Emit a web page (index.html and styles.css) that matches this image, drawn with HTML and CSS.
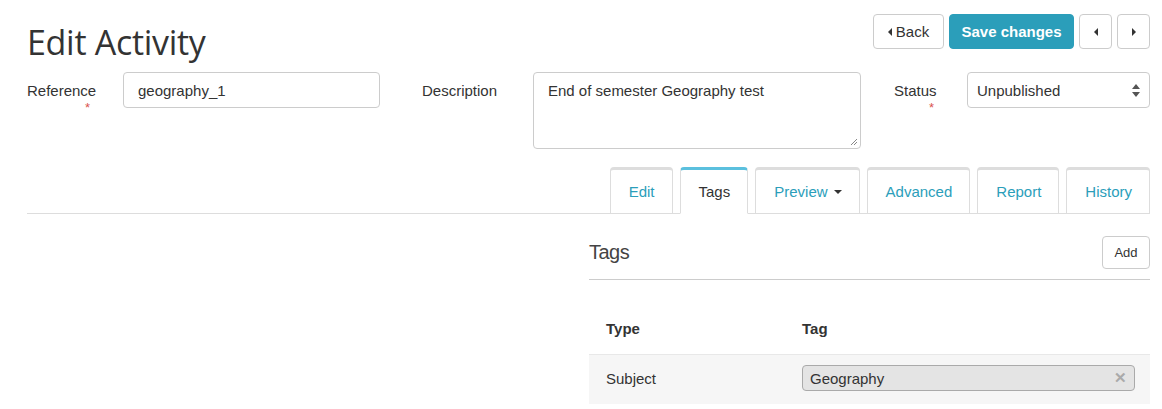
FILE: index.html
```html
<!DOCTYPE html>
<html>
<head>
<meta charset="utf-8">
<link rel="stylesheet" href="styles.css">
</head>
<body>
<div class="page">
  <div class="header">
    <h1 class="title">Edit Activity</h1>
    <div class="actions">
      <button class="btn btn-default btn-back"><span class="caret-left"></span>Back</button>
      <button class="btn btn-primary">Save changes</button>
      <button class="btn btn-default btn-icon"><span class="caret-left"></span></button>
      <button class="btn btn-default btn-icon"><span class="caret-right"></span></button>
    </div>
  </div>

  <div class="form-row">
    <div class="label label-ref">
      <span>Reference</span>
      <span class="req req-ref">*</span>
    </div>
    <div class="input input-ref">geography_1</div>

    <div class="label label-desc"><span>Description</span></div>
    <div class="textarea">End of semester Geography test
      <svg class="grip" width="8" height="8" viewBox="0 0 8 8"><path d="M7 1 L1 7 M7 4 L4 7" stroke="#888" stroke-width="1"/></svg>
    </div>

    <div class="label label-status">
      <span>Status</span>
      <span class="req req-status">*</span>
    </div>
    <div class="input select">Unpublished
      <svg class="updown" width="8" height="13" viewBox="0 0 8 13"><path d="M4 0 L8 5 L0 5 Z M0 8 L8 8 L4 13 Z" fill="#555"/></svg>
    </div>
  </div>

  <div class="tabs">
    <div class="tab">Edit</div>
    <div class="tab active">Tags</div>
    <div class="tab">Preview <span class="caret-down"></span></div>
    <div class="tab">Advanced</div>
    <div class="tab">Report</div>
    <div class="tab">History</div>
  </div>

  <div class="content">
    <div class="left-col"></div>
    <div class="panel">
      <div class="panel-head">
        <h2 class="panel-title">Tags</h2>
        <button class="btn btn-default btn-sm">Add</button>
      </div>
      <div class="table">
        <div class="thead">
          <div class="cell col-type">Type</div>
          <div class="cell col-tag">Tag</div>
        </div>
        <div class="trow">
          <div class="cell col-type">Subject</div>
          <div class="cell col-tag">
            <div class="tagbox"><span>Geography</span><span class="clear">✕</span></div>
          </div>
        </div>
      </div>
    </div>
  </div>
</div>
</body>
</html>
```

FILE: styles.css
```css
* { box-sizing: border-box; }
body {
  margin: 0;
  font-family: "Liberation Sans", Arial, sans-serif;
  font-size: 15px;
  color: #333;
  background: #fff;
}
.page {
  padding: 14px 12px 0 27px;
}
.header {
  display: flex;
  justify-content: space-between;
  align-items: flex-start;
  height: 58px;
}
.title {
  margin: 8px 0 0 0;
  font-family: "Open Sans", sans-serif;
  font-weight: 400;
  font-size: 34px;
  line-height: 40px;
  color: #333;
  letter-spacing: -0.3px;
}
.actions {
  display: flex;
  gap: 5px;
}
.btn {
  font-family: "Liberation Sans", Arial, sans-serif;
  height: 35px;
  border-radius: 4px;
  border: 1px solid #ccc;
  background: #fff;
  color: #333;
  font-size: 15px;
  padding: 0 12px;
  display: flex;
  align-items: center;
  justify-content: center;
  white-space: nowrap;
}
.btn-back { width: 71px; padding: 0 10px; gap: 4px; }
.btn-primary {
  background: #2b9eba;
  border-color: #2b9eba;
  color: #fff;
  font-weight: bold;
  width: 125px;
  padding: 0;
}
.btn-icon { width: 33px; padding: 0; }
.caret-left {
  display: inline-block;
  width: 0; height: 0;
  border-top: 4px solid transparent;
  border-bottom: 4px solid transparent;
  border-right: 4px solid #333;
}
.caret-right {
  display: inline-block;
  width: 0; height: 0;
  border-top: 4px solid transparent;
  border-bottom: 4px solid transparent;
  border-left: 4px solid #333;
}
.caret-down {
  display: inline-block;
  width: 0; height: 0;
  border-left: 4px solid transparent;
  border-right: 4px solid transparent;
  border-top: 4px solid #333;
  margin-left: 6px;
  vertical-align: middle;
}

.form-row {
  display: flex;
  align-items: flex-start;
  height: 95px;
}
.label {
  display: flex;
  flex-direction: column;
  padding-top: 9px;
  line-height: 20px;
}
.req {
  color: #d9534f;
  font-size: 13px;
  line-height: 14px;
}
.label-ref { width: 96px; }
.req-ref { padding-left: 58px; }
.label-desc { width: 111px; margin-left: 42px; }
.label-status { width: 73px; margin-left: 33px; }
.req-status { padding-left: 35px; }
.input {
  height: 36px;
  border: 1px solid #ccc;
  border-radius: 4px;
  padding: 0 14px;
  display: flex;
  align-items: center;
}
.input-ref { width: 257px; }
.textarea {
  position: relative;
  width: 328px;
  height: 77px;
  border: 1px solid #ccc;
  border-radius: 4px;
  padding: 9px 14px;
  line-height: 18px;
}
.grip { position: absolute; right: 2px; bottom: 2px; }
.select {
  width: 183px;
  padding: 0 9px;
  justify-content: space-between;
}

.tabs {
  display: flex;
  justify-content: flex-end;
  gap: 7px;
  border-bottom: 1px solid #ddd;
  height: 47px;
}
.tab {
  height: 47px;
  margin-bottom: -1px;
  border: 1px solid #ddd;
  border-top: 3px solid #ddd;
  border-bottom: 1px solid #ddd;
  border-radius: 4px 4px 0 0;
  color: #2b9eba;
  padding: 0 17px 0 18px;
  display: flex;
  align-items: center;
  background: #fff;
}
.tab.active {
  border-top-color: #5bc0de;
  border-bottom-color: #fff;
  color: #333;
}

.content {
  display: flex;
}
.left-col { width: 562px; flex: none; }
.panel { flex: 1; }
.panel-head {
  display: flex;
  justify-content: space-between;
  align-items: center;
  padding: 22px 0 10px 0;
  border-bottom: 1px solid #ccc;
}
.panel-title {
  margin: 0;
  font-size: 20px;
  font-weight: normal;
  color: #444;
  letter-spacing: -0.5px;
}
.btn-sm {
  height: 33px;
  width: 48px;
  font-size: 13px;
  padding: 0;
}
.table { margin-top: 23px; }
.thead, .trow {
  display: flex;
  align-items: center;
}
.thead {
  height: 51px;
  font-weight: bold;
  font-size: 15px;
}
.trow {
  height: 50px;
  background: #f6f6f6;
  border-top: 1px solid #e8e8e8;
  padding-bottom: 3px;
}
.cell { padding-left: 17px; }
.col-type { width: 213px; }
.col-tag { flex: 1; padding-right: 15px; padding-left: 0; }
.tagbox {
  height: 26px;
  background: #e4e4e4;
  border: 1px solid #aaa;
  border-radius: 4px;
  display: flex;
  align-items: center;
  justify-content: space-between;
  padding: 0 7px 0 7px;
}
.clear { color: #aaa; font-size: 15px; font-weight: bold; }
```
